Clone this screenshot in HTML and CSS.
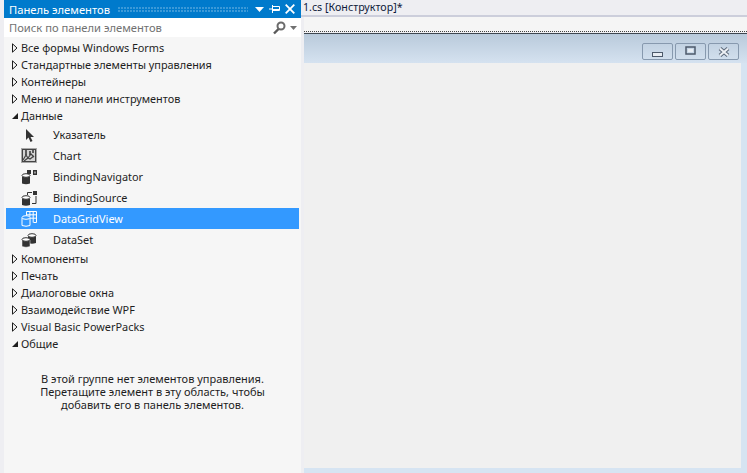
FILE: index.html
```html
<!DOCTYPE html>
<html lang="ru">
<head>
<meta charset="utf-8">
<title>Панель элементов</title>
<link rel="stylesheet" href="styles.css">
</head>
<body>
<aside class="panel">
  <header class="titlebar">
    <span class="title">Панель элементов</span>
    <span class="grip"></span>
    <svg class="tb-icon" width="9" height="5" viewBox="0 0 9 5"><path d="M0 0h9L4.500 5z" fill="#fff"/></svg>
    <svg class="tb-icon" width="11" height="8" viewBox="0 0 11 8"><path d="M0 4h3M3.500 1.500h7v4h-7zM3.500 0v8M4 4.500h6" fill="none" stroke="#fff" stroke-width="1"/></svg>
    <svg class="tb-icon" width="10" height="10" viewBox="0 0 10 10"><path d="M.7.700l8.600 8.600M9.300.700L.7 9.300" stroke="#fff" stroke-width="1.800"/></svg>
  </header>
  <div class="search">
    <span class="search-text">Поиск по панели элементов</span>
    <svg width="13" height="14" viewBox="0 0 13 14"><circle cx="8" cy="5" r="3.500" fill="none" stroke="#6b6b6b" stroke-width="2"/><path d="M5.500 8L1 12.500" stroke="#5a5a5a" stroke-width="2.400"/></svg>
    <svg class="search-drop" width="7" height="4" viewBox="0 0 7 4"><path d="M0 0h7L3.500 4z" fill="#717171"/></svg>
  </div>
  <div class="list">
    <div class="group"><svg class="arrow" width="6" height="10" viewBox="0 0 6 10"><path d="M.5 .8L5 5 .5 9.200z" fill="none" stroke="#1e1e1e"/></svg>Все формы Windows Forms</div>
    <div class="group"><svg class="arrow" width="6" height="10" viewBox="0 0 6 10"><path d="M.5 .8L5 5 .5 9.200z" fill="none" stroke="#1e1e1e"/></svg>Стандартные элементы управления</div>
    <div class="group"><svg class="arrow" width="6" height="10" viewBox="0 0 6 10"><path d="M.5 .8L5 5 .5 9.200z" fill="none" stroke="#1e1e1e"/></svg>Контейнеры</div>
    <div class="group"><svg class="arrow" width="6" height="10" viewBox="0 0 6 10"><path d="M.5 .8L5 5 .5 9.200z" fill="none" stroke="#1e1e1e"/></svg>Меню и панели инструментов</div>
    <div class="group"><svg class="arrow" width="6" height="10" viewBox="0 0 6 10"><path d="M0 8L6 2v6z" fill="#1e1e1e"/></svg>Данные</div>

    <div class="item"><span class="ico"><svg width="16" height="16" viewBox="0 0 16 16"><path d="M5 2v11l2.500-2.500L9.500 15l2-1-2-4H13z" fill="#333"/></svg></span>Указатель</div>
    <div class="item"><span class="ico"><svg width="16" height="15" viewBox="0 0 16 15"><rect width="16" height="15" fill="#a8a8a8"/><rect x="1.500" y="1.500" width="13" height="12" fill="#d4d4d4" stroke="#444"/><path d="M2 12l3-5 2 3 3-4 3 3M3 13l4-3 2 1 4-3" fill="none" stroke="#444" stroke-width="1.200"/><path d="M5 2v5M9 3v4M12 2v3" stroke="#333" stroke-width="1.500"/></svg></span>Chart</div>
    <div class="item"><span class="ico"><svg width="16" height="16" viewBox="0 0 16 16"><path d="M1 7.500h8V14.500q-4 1.500-8 0z" fill="#333"/><ellipse cx="5" cy="6.500" rx="4" ry="1.800" fill="#fff" stroke="#333"/><rect x="6" y="1" width="4" height="4" fill="#333"/><rect x="12" y="1" width="4" height="5" fill="#333"/><rect x="13.500" y="2.500" width="1" height="2" fill="#fff"/></svg></span>BindingNavigator</div>
    <div class="item"><span class="ico"><svg width="16" height="16" viewBox="0 0 16 16"><path d="M1 8.500h8V15q-4 1.500-8 0z" fill="#333"/><ellipse cx="5" cy="7.500" rx="4" ry="1.800" fill="#fff" stroke="#333"/><rect x="12" y="1" width="4" height="4" fill="#333"/><path d="M6.500 5V2.500H11M15 6v7.500H11" fill="none" stroke="#333"/></svg></span>BindingSource</div>
    <div class="item selected"><span class="ico"><svg width="16" height="16" viewBox="0 0 16 16"><path d="M5.500 .500h10v11h-3M5.500 .500v4M8.900 .500v5M12.200 .500v11M5.500 3.800h10M9 7.200h6.500" fill="none" stroke="#fff"/><path d="M1 7v7.500q4 1.500 8 0V7z" fill="#3399ff" stroke="#fff"/><ellipse cx="5" cy="6.500" rx="4" ry="1.800" fill="#3399ff" stroke="#fff"/></svg></span>DataGridView</div>
    <div class="item"><span class="ico"><svg width="16" height="16" viewBox="0 0 16 16"><path d="M7 4h8v7q-4 1.500-8 0z" fill="#333"/><ellipse cx="11" cy="3.500" rx="4" ry="1.800" fill="#fff" stroke="#333"/><path d="M1 8h8v6.500q-4 1.500-8 0z" fill="#333" stroke="#f6f6f6" stroke-width=".5"/><ellipse cx="5" cy="7.500" rx="4" ry="1.800" fill="#fff" stroke="#333"/></svg></span>DataSet</div>

    <div class="group"><svg class="arrow" width="6" height="10" viewBox="0 0 6 10"><path d="M.5 .8L5 5 .5 9.200z" fill="none" stroke="#1e1e1e"/></svg>Компоненты</div>
    <div class="group"><svg class="arrow" width="6" height="10" viewBox="0 0 6 10"><path d="M.5 .8L5 5 .5 9.200z" fill="none" stroke="#1e1e1e"/></svg>Печать</div>
    <div class="group"><svg class="arrow" width="6" height="10" viewBox="0 0 6 10"><path d="M.5 .8L5 5 .5 9.200z" fill="none" stroke="#1e1e1e"/></svg>Диалоговые окна</div>
    <div class="group"><svg class="arrow" width="6" height="10" viewBox="0 0 6 10"><path d="M.5 .8L5 5 .5 9.200z" fill="none" stroke="#1e1e1e"/></svg>Взаимодействие WPF</div>
    <div class="group"><svg class="arrow" width="6" height="10" viewBox="0 0 6 10"><path d="M.5 .8L5 5 .5 9.200z" fill="none" stroke="#1e1e1e"/></svg>Visual Basic PowerPacks</div>
    <div class="group"><svg class="arrow" width="6" height="10" viewBox="0 0 6 10"><path d="M0 8L6 2v6z" fill="#1e1e1e"/></svg>Общие</div>

    <div class="empty">
      <div class="empty-line">В этой группе нет элементов управления.</div>
      <div class="empty-line">Перетащите элемент в эту область, чтобы</div>
      <div class="empty-line">добавить его в панель элементов.</div>
    </div>
  </div>
</aside>
<main class="editor">
  <div class="tabbar"><span class="tab">1.cs [Конструктор]*</span></div>
  <div class="toolstrip"></div>
  <div class="designer">
    <div class="caption">
      <span class="winbtn btn-min"><svg width="11" height="5" viewBox="0 0 11 5"><rect x=".5" y=".5" width="10" height="4" fill="#e8edf3" stroke="#4d5a6b"/></svg></span>
      <span class="winbtn btn-max"><svg width="11" height="9" viewBox="0 0 11 9"><rect x="1" y="1" width="9" height="7" fill="none" stroke="#4d5a6b" stroke-width="1.500"/><rect x="3" y="3" width="5" height="3" fill="#e8edf3"/></svg></span>
      <span class="winbtn"><svg width="12" height="10" viewBox="0 0 12 10"><path d="M2 1.500l8 7M10 1.500l-8 7" stroke="#5d6a7b" stroke-width="4"/><path d="M2 1.500l8 7M10 1.500l-8 7" stroke="#eef1f5" stroke-width="2"/></svg></span>
    </div>
    <div class="form"></div>
  </div>
</main>
</body>
</html>
```
FILE: styles.css
```css
* { box-sizing: border-box; }
html, body { height: 100%; }
body {
  margin: 0;
  height: 473px;
  overflow: hidden;
  display: flex;
  padding-left: 4px;
  background: #eeeef2;
  font-family: "Noto Sans", "Open Sans", sans-serif;
  font-size: 10.9px;
  color: #1e1e1e;
}
.panel {
  width: 297px;
  flex: none;
  display: flex;
  flex-direction: column;
}
.titlebar {
  height: 18px;
  background: #007acc;
  color: #fff;
  display: flex;
  align-items: center;
  padding: 0 6px 0 5px;
  gap: 5px;
}
.title { font-size: 11.2px; }
.grip {
  flex: 1;
  height: 5px;
  margin: 0 2px 0 3px;
  background-image: radial-gradient(circle at 1px 1px, #3b99d8 .8px, transparent 1px);
  background-size: 3px 3px;
}
.tb-icon { flex: none; }
.search {
  height: 19px;
  background: #fff;
  display: flex;
  align-items: center;
  padding: 0 4px 0 5px;
  color: #717171;
  font-size: 11.2px;
}
.search-text { flex: 1; }
.search-drop { margin-left: 4px; }
.list {
  flex: 1;
  background: #f6f6f6;
  padding-top: 2px;
}
.group {
  height: 17px;
  display: flex;
  align-items: center;
  padding-left: 8px;
  gap: 3px;
  line-height: 17px;
}
.arrow { flex: none; width: 6px; height: 10px; }
.item {
  height: 21px;
  margin: 0 2px;
  display: flex;
  align-items: center;
  padding-left: 15px;
}
.ico {
  width: 32px;
  flex: none;
  display: flex;
  align-items: center;
}
.selected { background: #3399ff; color: #fff; }
.empty {
  margin-top: 20px;
  text-align: center;
  font-size: 11px;
}
.empty-line {
  height: 13px;
  line-height: 13px;
}
.editor {
  flex: 1;
  display: flex;
  flex-direction: column;
}
.tabbar {
  height: 17px;
  border-bottom: 2px solid #cccedb;
  line-height: 14px;
  padding-left: 2px;
  color: #0e1a3a;
  font-size: 10.7px;
}
.toolstrip {
  height: 15px;
  margin: 0 0 1px 3px;
  background: #f5f5f5;
  border-bottom: 1px dotted #444;
}
.designer {
  flex: 1;
  margin-left: 3px;
  background: #d6e4f2;
  border-top: 1px solid #3f4750;
  display: flex;
  flex-direction: column;
  padding-bottom: 5px;
}
.caption {
  height: 29px;
  flex: none;
  background: linear-gradient(#b9cadb, #d5e2f0);
  display: flex;
  justify-content: flex-end;
  align-items: flex-start;
  gap: 2px;
  padding: 9px 8px 0 0;
}
.winbtn {
  width: 31px;
  height: 17px;
  border: 1px solid #8799ae;
  border-radius: 2px;
  background: transparent;
  display: flex;
  align-items: center;
  justify-content: center;
}
.btn-min { align-items: flex-end; padding-bottom: 2px; }
.btn-max { align-items: flex-start; padding-top: 2px; }
.form {
  flex: 1;
  background: #f0f0f0;
  margin-right: 6px;
}
```
